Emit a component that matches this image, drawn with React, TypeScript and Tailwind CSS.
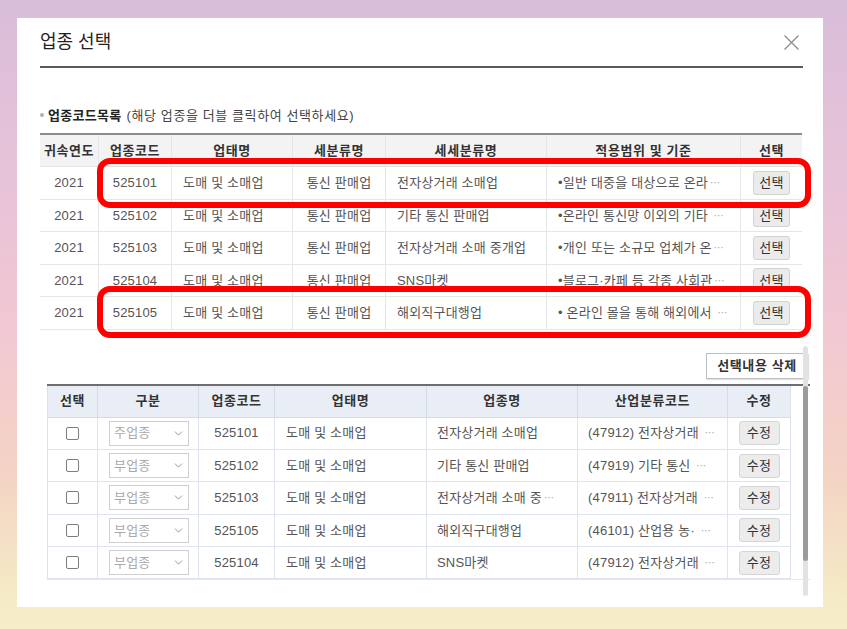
import { ChevronDown } from "lucide-react";

const FONT = "font-['Liberation_Sans','Noto_Sans_CJK_KR',sans-serif]";

const topHeaders = ["귀속연도", "업종코드", "업태명", "세분류명", "세세분류명", "적용범위 및 기준", "선택"];
const topAlign = ["c", "c", "l", "c", "l", "l", "c"];
const topRows: string[][] = [
  ["2021", "525101", "도매 및 소매업", "통신 판매업", "전자상거래 소매업", "•일반 대중을 대상으로 온라"],
  ["2021", "525102", "도매 및 소매업", "통신 판매업", "기타 통신 판매업", "•온라인 통신망 이외의 기타 "],
  ["2021", "525103", "도매 및 소매업", "통신 판매업", "전자상거래 소매 중개업", "•개인 또는 소규모 업체가 온"],
  ["2021", "525104", "도매 및 소매업", "통신 판매업", "SNS마켓", "•블로그·카페 등 각종 사회관"],
  ["2021", "525105", "도매 및 소매업", "통신 판매업", "해외직구대행업", "• 온라인 몰을 통해 해외에서 "],
];

const botHeaders = ["선택", "구분", "업종코드", "업태명", "업종명", "산업분류코드", "수정"];
const botRows: { kind: string; code: string; biz: string; name: string; nameEll: boolean; ind: string }[] = [
  { kind: "주업종", code: "525101", biz: "도매 및 소매업", name: "전자상거래 소매업", nameEll: false, ind: "(47912) 전자상거래 " },
  { kind: "부업종", code: "525102", biz: "도매 및 소매업", name: "기타 통신 판매업", nameEll: false, ind: "(47919) 기타 통신 " },
  { kind: "부업종", code: "525103", biz: "도매 및 소매업", name: "전자상거래 소매 중", nameEll: true, ind: "(47911) 전자상거래 " },
  { kind: "부업종", code: "525105", biz: "도매 및 소매업", name: "해외직구대행업", nameEll: false, ind: "(46101) 산업용 농· " },
  { kind: "부업종", code: "525104", biz: "도매 및 소매업", name: "SNS마켓", nameEll: false, ind: "(47912) 전자상거래 " },
];

function Ell() {
  return <span className="ml-[2px] text-[10px] text-[#aaa]">⋯</span>;
}

function TopCell({ i, children }: { i: number; children: React.ReactNode }) {
  const align = topAlign[i] === "c" ? "justify-center" : "justify-start pl-[11px]";
  const border = i < 6 ? "border-r border-[#e6e6e6]" : "";
  return (
    <div className={`flex items-center overflow-hidden whitespace-nowrap ${align} ${border}`}>
      <span className="whitespace-pre">{children}</span>
    </div>
  );
}

export default function App() {
  return (
    <div
      className={`h-[629px] w-[847px] overflow-hidden bg-[linear-gradient(180deg,#d9bed9_0%,#e8c3d8_30%,#f1c8d3_52%,#f4d3c4_75%,#f5ecc6_96%,#f5eec8_100%)] pl-[17px] pt-[18px] ${FONT}`}
    >
      <div className="relative h-[589px] w-[806px] bg-white px-[23px]">
        {/* header */}
        <div className="flex h-[48px] items-center justify-between">
          <div className="text-[18px] leading-none text-[#222]">업종 선택</div>
          <svg width="15" height="15" viewBox="0 0 15 15" className="mr-[1px]">
            <path d="M0.5 0.5 L14.5 14.5 M14.5 0.5 L0.5 14.5" stroke="#8a8a8a" strokeWidth="1.2" fill="none" />
          </svg>
        </div>
        <div className="h-[2px] w-[763px] bg-[#595959]" />

        {/* label */}
        <div className="mt-[38px] flex h-[18px] items-center text-[13px] leading-none text-[#333]">
          <span className="mr-[4px] inline-block h-[4px] w-[4px] rounded-full bg-[#b0b0b0]" />
          <span className="font-bold tracking-[0.3px] text-[#222]">업종코드목록</span>
          <span className="ml-[5px] tracking-[0.6px] text-[#444]">(해당 업종을 더블 클릭하여 선택하세요)</span>
        </div>

        {/* top table */}
        <div className="relative mt-[9px] w-[762px]">
          <div className="border-t-2 border-[#8c8c8c]">
            <div className="grid h-[32px] grid-cols-[59px_73px_121px_93px_161px_194px_61px] border-b border-[#e2e2e2] bg-[#f3f3f3] text-[13px] font-bold text-[#333]">
              {topHeaders.map((h, i) => (
                <div
                  key={h}
                  className={`flex items-center justify-center tracking-[0.6px] ${i < 6 ? "border-r border-[#e6e6e6]" : ""}`}
                >
                  {h}
                </div>
              ))}
            </div>
            {topRows.map((r) => (
              <div
                key={r[1]}
                className="grid h-[32.5px] grid-cols-[59px_73px_121px_93px_161px_194px_61px] border-b border-[#e6e6e6] text-[13px] tracking-[0.2px] text-[#555]"
              >
                <TopCell i={0}>{r[0]}</TopCell>
                <TopCell i={1}>{r[1]}</TopCell>
                <TopCell i={2}>{r[2]}</TopCell>
                <TopCell i={3}>{r[3]}</TopCell>
                <TopCell i={4}>{r[4]}</TopCell>
                <TopCell i={5}>
                  {r[5]}
                  <Ell />
                </TopCell>
                <TopCell i={6}>
                  <span className="flex h-[24px] w-[37px] items-center justify-center rounded-[3px] border border-[#d2d2d2] bg-[#ebebeb] text-[13px] text-[#333]">
                    선택
                  </span>
                </TopCell>
              </div>
            ))}
          </div>
          {/* red annotation boxes */}
          <div className="pointer-events-none absolute left-[57px] top-[25px] h-[50px] w-[714px] rounded-[13px] border-[6px] border-[#ff0000]" />
          <div className="pointer-events-none absolute left-[57px] top-[153px] h-[52px] w-[714px] rounded-[13px] border-[6px] border-[#ff0000]" />
        </div>

        {/* bottom scroll region */}
        <div className="relative mt-[16px] h-[250px] w-[770px]">
          <div className="flex justify-end pr-[2px] pt-[7px]">
            <div className="flex h-[26px] w-[102px] items-center justify-center border border-[#bdbdbd] bg-white text-[13px] font-bold tracking-[0.6px] text-[#333] shadow-[1px_1px_1px_rgba(0,0,0,0.12)]">
              선택내용 삭제
            </div>
          </div>
          <div className="ml-[7px] mt-[5px] w-[763px] border-t-2 border-b border-t-[#6e6e6e] border-b-[#e3e8ef]">
            <div className="w-[744px] border-x border-[#dbe2ec]">
              <div className="grid h-[32px] grid-cols-[50px_101px_76px_152px_151px_150px_62px] border-b border-[#d3dbe6] bg-[#e9eef6] text-[13px] font-bold text-[#333]">
                {botHeaders.map((h, i) => (
                  <div
                    key={h}
                    className={`flex items-center justify-center tracking-[0.6px] ${i < 6 ? "border-r border-[#d3dbe6]" : ""}`}
                  >
                    {h}
                  </div>
                ))}
              </div>
              {botRows.map((r) => (
                <div
                  key={r.code}
                  className="grid h-[32.4px] grid-cols-[50px_101px_76px_152px_151px_150px_62px] border-b border-[#dfe5ee] text-[13px] tracking-[0.2px] text-[#555]"
                >
                  <div className="flex items-center justify-center border-r border-[#dfe5ee]">
                    <span className="inline-block h-[13px] w-[13px] rounded-[2px] border border-[#7d7d7d] bg-white" />
                  </div>
                  <div className="flex items-center border-r border-[#dfe5ee] pl-[11px]">
                    <div className="flex h-[25px] w-[80px] items-center justify-between border border-[#cfcfcf] bg-white pl-[4px] pr-[3px] text-[13px] text-[#aaa]">
                      <span>{r.kind}</span>
                      <ChevronDown size={13} strokeWidth={1.6} color="#888" />
                    </div>
                  </div>
                  <div className="flex items-center justify-center border-r border-[#dfe5ee]">{r.code}</div>
                  <div className="flex items-center whitespace-nowrap border-r border-[#dfe5ee] pl-[11px]">{r.biz}</div>
                  <div className="flex items-center whitespace-nowrap border-r border-[#dfe5ee] pl-[10px]">
                    <span className="whitespace-pre">
                      {r.name}
                      {r.nameEll && <Ell />}
                    </span>
                  </div>
                  <div className="flex items-center whitespace-nowrap border-r border-[#dfe5ee] pl-[10px]">
                    <span className="whitespace-pre">
                      {r.ind}
                      <Ell />
                    </span>
                  </div>
                  <div className="flex items-center justify-center">
                    <div className="flex h-[24px] w-[41px] items-center justify-center rounded-[3px] border border-[#d6d6d6] bg-[#ececec] text-[13px] text-[#333]">
                      수정
                    </div>
                  </div>
                </div>
              ))}
            </div>
          </div>
          {/* scrollbar */}
          <div className="absolute right-[2px] top-0 h-[250px] w-[5px] rounded-[3px] bg-[#e2e2e2]">
            <div className="mt-[40px] h-[175px] w-[5px] rounded-[3px] bg-[#9b9b9b]" />
          </div>
        </div>
      </div>
    </div>
  );
}
